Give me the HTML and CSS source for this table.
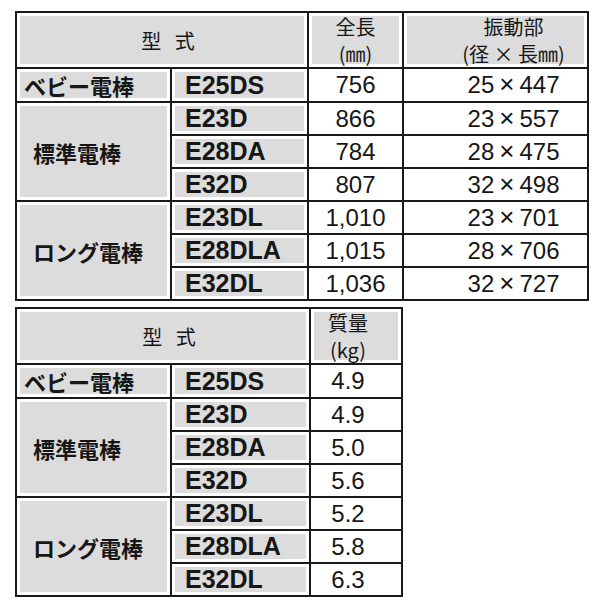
FILE: index.html
```html
<!DOCTYPE html>
<html lang="ja">
<head>
<meta charset="utf-8">
<title>仕様表</title>
<link rel="stylesheet" href="styles.css">
</head>
<body>
<div class="page">
  <table class="spec spec-dim">
    <colgroup>
      <col class="c-series"><col class="c-model"><col class="c-len"><col class="c-vib">
    </colgroup>
    <thead>
      <tr>
        <th colspan="2" class="hd hd-type">型 式</th>
        <th class="hd hd-len"><span class="ln">全長</span><span class="ln">(㎜)</span></th>
        <th class="hd hd-vib"><span class="ln">振動部</span><span class="ln">(径 × 長㎜)</span></th>
      </tr>
    </thead>
    <tbody>
      <tr class="grp">
        <th class="series series-baby">ベビー電棒</th>
        <th class="model">E25DS</th>
        <td class="num">756</td>
        <td class="dim">25<span class="x">×</span>447</td>
      </tr>
      <tr class="grp">
        <th rowspan="3" class="series">標準電棒</th>
        <th class="model">E23D</th>
        <td class="num">866</td>
        <td class="dim">23<span class="x">×</span>557</td>
      </tr>
      <tr>
        <th class="model">E28DA</th>
        <td class="num">784</td>
        <td class="dim">28<span class="x">×</span>475</td>
      </tr>
      <tr>
        <th class="model">E32D</th>
        <td class="num">807</td>
        <td class="dim">32<span class="x">×</span>498</td>
      </tr>
      <tr class="grp">
        <th rowspan="3" class="series">ロング電棒</th>
        <th class="model">E23DL</th>
        <td class="num">1,010</td>
        <td class="dim">23<span class="x">×</span>701</td>
      </tr>
      <tr>
        <th class="model">E28DLA</th>
        <td class="num">1,015</td>
        <td class="dim">28<span class="x">×</span>706</td>
      </tr>
      <tr>
        <th class="model">E32DL</th>
        <td class="num">1,036</td>
        <td class="dim">32<span class="x">×</span>727</td>
      </tr>
    </tbody>
  </table>

  <table class="spec spec-mass">
    <colgroup>
      <col class="c-series"><col class="c-model2"><col class="c-mass">
    </colgroup>
    <thead>
      <tr>
        <th colspan="2" class="hd hd-type">型 式</th>
        <th class="hd hd-mass"><span class="ln">質量</span><span class="ln">(kg)</span></th>
      </tr>
    </thead>
    <tbody>
      <tr class="grp">
        <th class="series series-baby">ベビー電棒</th>
        <th class="model">E25DS</th>
        <td class="num mass">4.9</td>
      </tr>
      <tr class="grp">
        <th rowspan="3" class="series">標準電棒</th>
        <th class="model">E23D</th>
        <td class="num mass">4.9</td>
      </tr>
      <tr>
        <th class="model">E28DA</th>
        <td class="num mass">5.0</td>
      </tr>
      <tr>
        <th class="model">E32D</th>
        <td class="num mass">5.6</td>
      </tr>
      <tr class="grp">
        <th rowspan="3" class="series">ロング電棒</th>
        <th class="model">E23DL</th>
        <td class="num mass">5.2</td>
      </tr>
      <tr>
        <th class="model">E28DLA</th>
        <td class="num mass">5.8</td>
      </tr>
      <tr>
        <th class="model">E32DL</th>
        <td class="num mass">6.3</td>
      </tr>
    </tbody>
  </table>
</div>
</body>
</html>
```

FILE: styles.css
```css
html, body {
  margin: 0;
  padding: 0;
  background: #ffffff;
}

.page {
  display: flex;
  flex-direction: column;
  align-items: flex-start;
  gap: 6px;
  padding: 11px 0 0 15px;
  font-family: "Liberation Sans", "Noto Sans CJK JP", sans-serif;
  color: #161616;
}

.spec {
  border-collapse: collapse;
  table-layout: fixed;
  border: 2px solid #1a1a1a;
}

.spec-dim { width: 574px; }
.spec-mass { width: 388px; }

.c-series { width: 155px; }
.c-model { width: 137px; }
.c-len { width: 95px; }
.c-vib { width: 185px; }
.c-model2 { width: 139px; }
.c-mass { width: 92px; }

.spec th,
.spec td {
  border: 2px solid #1a1a1a;
  padding: 0;
  height: 31px;
  vertical-align: middle;
  white-space: nowrap;
}

.spec th {
  background: #dcdcdc;
  box-shadow: inset 0 0 0 3px #ffffff;
}

.spec .hd {
  font-family: "Noto Sans CJK JP", sans-serif;
  font-weight: 400;
  font-size: 20px;
  line-height: 27px;
  text-align: center;
}

.spec .ln {
  display: block;
  height: 27px;
}

.spec-dim thead th { height: 54px; }
.spec-mass thead th { height: 51px; }

.spec .hd-type {
  padding-left: 12px;
  word-spacing: 9px;
}
.spec .hd-vib { padding-left: 36px; }
.spec .hd-mass { padding-right: 16px; }

.spec .series {
  font-family: "Noto Sans CJK JP", sans-serif;
  font-weight: 700;
  font-size: 22px;
  text-align: left;
  padding-left: 16px;
}

.spec .series-baby { padding-left: 7px; }

.spec .model {
  font-family: "Liberation Sans", sans-serif;
  font-weight: 700;
  font-size: 25px;
  text-align: left;
  padding-left: 13px;
}

.spec .num {
  font-family: "Liberation Sans", sans-serif;
  font-size: 24px;
  text-align: center;
}

.spec .dim {
  font-family: "Liberation Sans", sans-serif;
  font-size: 24px;
  text-align: center;
  padding-left: 36px;
}

.spec .mass { padding-right: 16px; }

.x {
  display: inline-block;
  margin: 0 5px;
  font-size: 26px;
  line-height: 24px;
}
```
